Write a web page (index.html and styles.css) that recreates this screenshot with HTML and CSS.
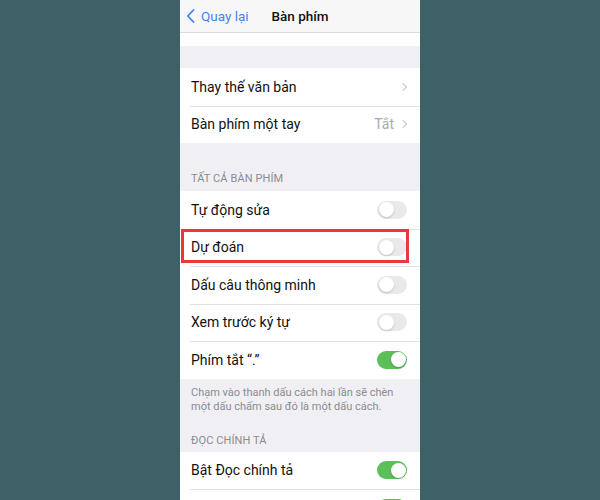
FILE: index.html
```html
<!DOCTYPE html>
<html lang="vi">
  <head>
    <meta charset="UTF-8" />
    <meta name="viewport" content="width=device-width, initial-scale=1.0" />
    <title>Bàn phím</title>
    <link rel="stylesheet" href="styles.css">
  </head>
  <body>
    <div class="phone">
      <!-- thanh điều hướng -->
      <div class="navbar">
        <a class="back" href="#">
          <svg width="9" height="14" viewBox="0 0 9 14"><path d="M7.5 1 L1.8 7 L7.5 13" fill="none" stroke="#3b86f0" stroke-width="1.8" stroke-linecap="round" stroke-linejoin="round"/></svg>
          <span>Quay lại</span>
        </a>
        <div class="title">Bàn phím</div>
      </div>

      <div class="group cut"></div>
      <div class="gap"></div>

      <div class="group">
        <div class="row">
          <span class="label">Thay thế văn bản</span>
          <span class="right"><i class="chev"></i></span>
        </div>
        <div class="row">
          <span class="label">Bàn phím một tay</span>
          <span class="right"><span class="value">Tắt</span><i class="chev"></i></span>
        </div>
      </div>

      <div class="section-title first">TẤT CẢ BÀN PHÍM</div>
      <div class="group">
        <div class="row">
          <span class="label">Tự động sửa</span>
          <span class="switch"></span>
        </div>
        <div class="row marked">
          <span class="label">Dự đoán</span>
          <span class="switch"></span>
          <span class="mark"></span>
        </div>
        <div class="row">
          <span class="label">Dấu câu thông minh</span>
          <span class="switch"></span>
        </div>
        <div class="row">
          <span class="label">Xem trước ký tự</span>
          <span class="switch"></span>
        </div>
        <div class="row">
          <span class="label">Phím tắt “.”</span>
          <span class="switch on"></span>
        </div>
      </div>
      <p class="note">Chạm vào thanh dấu cách hai lần sẽ chèn một dấu chấm sau đó là một dấu cách.</p>

      <div class="section-title">ĐỌC CHÍNH TẢ</div>
      <div class="group">
        <div class="row">
          <span class="label">Bật Đọc chính tả</span>
          <span class="switch on"></span>
        </div>
        <div class="row">
          <span class="label"></span>
          <span class="switch on"></span>
        </div>
      </div>
    </div>
  </body>
</html>
```

FILE: styles.css
```css
* {
  padding: 0;
  margin: 0;
  box-sizing: border-box;
}
body {
  background: #3d6167;
  font-family: "Roboto", "Liberation Sans", sans-serif;
  height: 500px;
  overflow: hidden;
}
.phone {
  width: 240px;
  height: 500px;
  margin: 0 auto;
  background: #f0f0f4;
  overflow: hidden;
}

/* thanh trên cùng */
.navbar {
  height: 33px;
  background: #f7f7f8;
  border-bottom: 1px solid #d9d9dc;
  display: flex;
  align-items: center;
  position: relative;
}
.back {
  display: flex;
  align-items: center;
  gap: 6px;
  padding-left: 6px;
  text-decoration: none;
  color: #3b86f0;
  font-size: 13.5px;
}
.title {
  position: absolute;
  left: 0;
  right: 0;
  text-align: center;
  font-size: 13.5px;
  font-weight: 500;
  color: #111;
  pointer-events: none;
}

/* nhóm cài đặt */
.group {
  background: #fff;
}
.group.cut {
  height: 13px;
}
.gap {
  height: 22px;
}
.row {
  height: 37.5px;
  display: flex;
  align-items: center;
  justify-content: space-between;
  padding: 0 12px 0 11px;
  position: relative;
  font-size: 14px;
  color: #111;
}
.row + .row::before {
  content: "";
  position: absolute;
  top: 0;
  left: 10px;
  right: 0;
  border-top: 1px solid #e2e2e5;
}
.right {
  display: flex;
  align-items: center;
  gap: 6px;
  color: #a9a9ad;
}
.chev {
  width: 6px;
  height: 6px;
  border-top: 1.3px solid #c6c6c9;
  border-right: 1.3px solid #c6c6c9;
  transform: rotate(45deg);
  margin-right: 2px;
}

.section-title {
  height: 38px;
  padding: 0 11px 5px;
  display: flex;
  align-items: flex-end;
  font-size: 11px;
  color: #8b8b90;
  letter-spacing: 0.1px;
}
.section-title.first {
  height: 48px;
  padding-bottom: 6px;
}
.note {
  padding: 7px 11px 0;
  font-size: 11px;
  line-height: 14px;
  color: #8b8b90;
}

/* công tắc */
.switch {
  width: 30px;
  height: 18px;
  border-radius: 9px;
  background: #e9e9eb;
  position: relative;
  margin-right: 1px;
}
.switch::after {
  content: "";
  position: absolute;
  top: 1.5px;
  left: 1.5px;
  width: 15px;
  height: 15px;
  border-radius: 50%;
  background: #fff;
  box-shadow: 0 1px 2px rgba(0, 0, 0, 0.2);
}
.switch.on {
  background: #5cbf5a;
}
.switch.on::after {
  left: 13.5px;
}

/* khung đỏ đánh dấu */
.mark {
  position: absolute;
  left: 1px;
  top: 0;
  width: 228px;
  height: 34px;
  border: 3px solid #e8383d;
}
```
